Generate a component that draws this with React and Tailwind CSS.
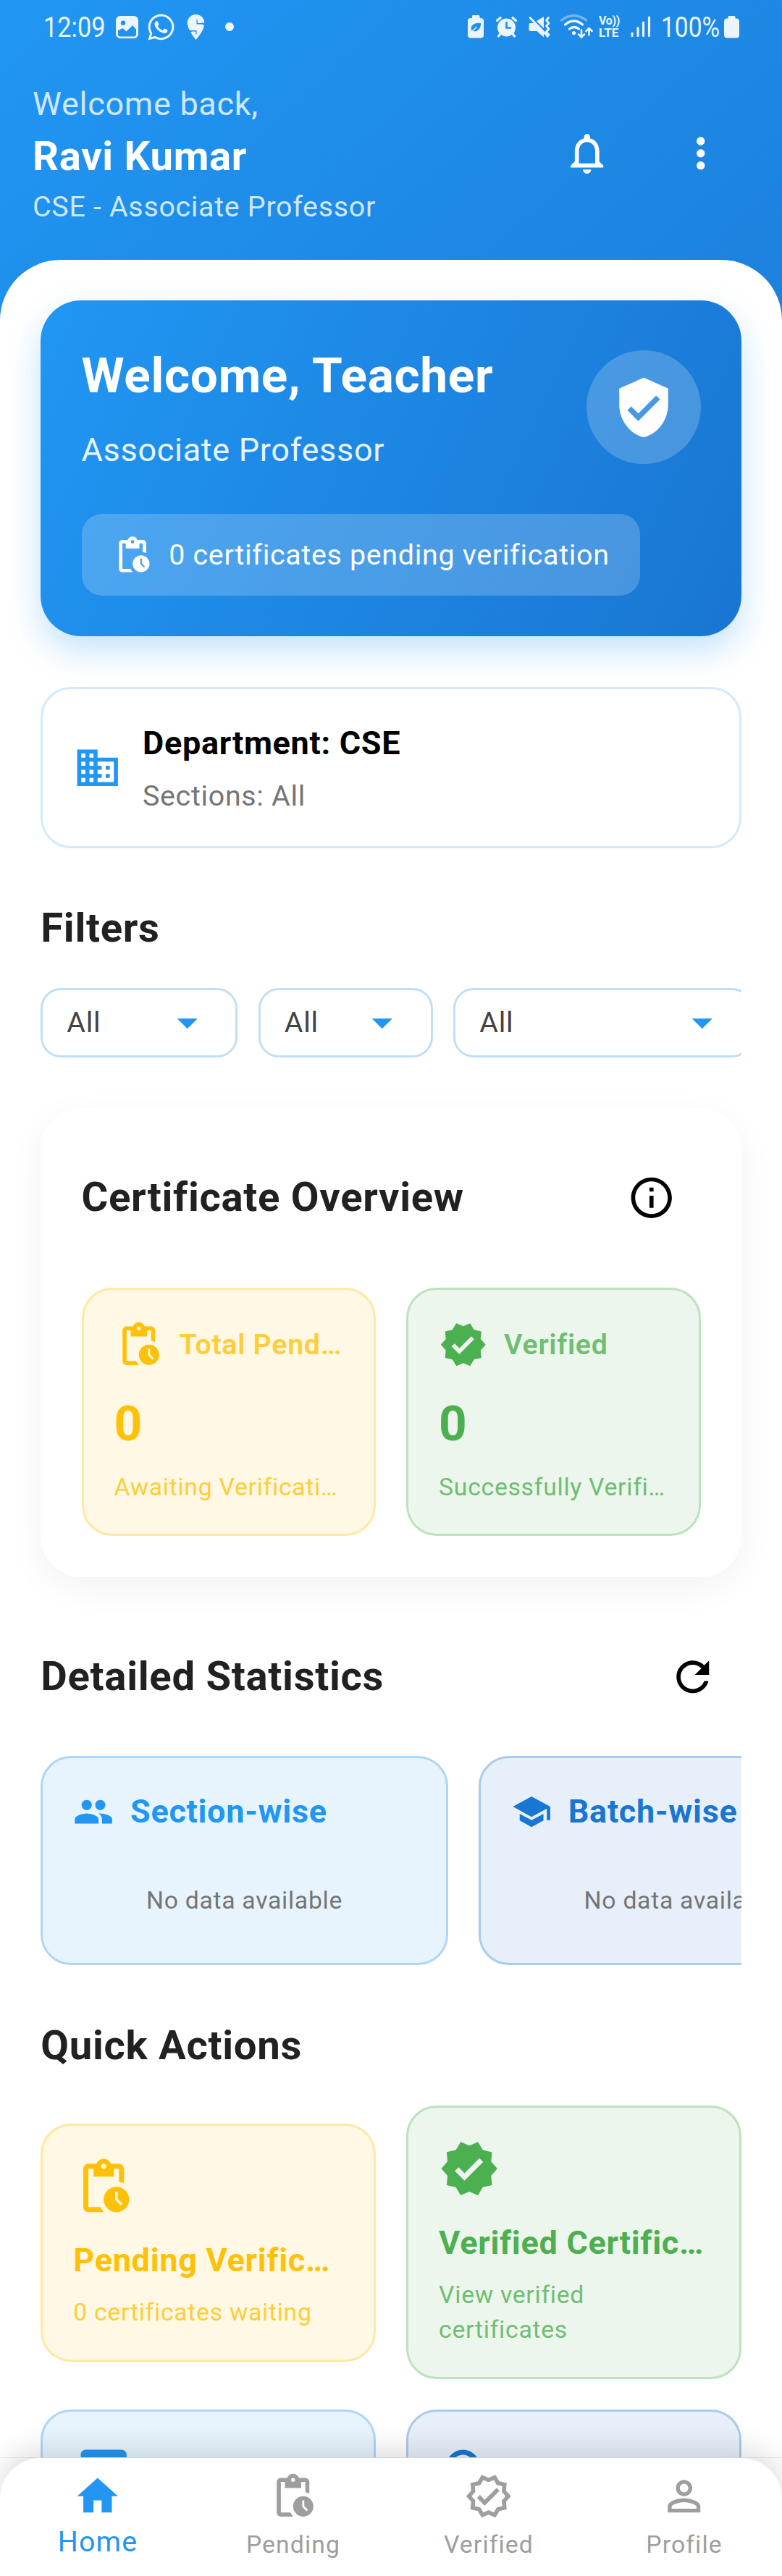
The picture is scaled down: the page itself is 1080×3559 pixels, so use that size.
import React from 'react';
import {
  MdArrowDropDown,
  MdAssessment,
  MdBusiness,
  MdHome,
  MdInfoOutline,
  MdMoreVert,
  MdNotificationsNone,
  MdOutlineVerified,
  MdPendingActions,
  MdPeople,
  MdPersonOutline,
  MdRefresh,
  MdSchool,
  MdSearch,
  MdVerified,
  MdVerifiedUser,
} from 'react-icons/md';
import { FaWhatsapp } from 'react-icons/fa';
import { SiSwiggy } from 'react-icons/si';

function StatusBar() {
  return (
    <div className="flex h-[76px] items-start pl-[60px] pr-[59px] text-[#eaf5ff]">
      <div className="mt-[18px] w-[98px] origin-left scale-x-[0.88] text-[39px] leading-[40px] tracking-normal">12:09</div>
      <svg className="mt-[22px] ml-[2px] h-[31px] w-[31px]" viewBox="0 0 31 31" fill="currentColor">
        <path
          fillRule="evenodd"
          d="M6 0h19a6 6 0 0 1 6 6v19a6 6 0 0 1-6 6H6a6 6 0 0 1-6-6V6a6 6 0 0 1 6-6zM10 6.5a3.2 3.2 0 1 0 0 6.4 3.2 3.2 0 0 0 0-6.4zM3 20v5.5a3 3 0 0 0 3 3h19a3 3 0 0 0 3-3V18.500l-5-5.500-8.500 8.500-5-4.500z"
        />
      </svg>
      <FaWhatsapp className="mt-[17px] ml-[11px] h-[41px] w-[41px]" />
      <SiSwiggy className="mt-[20px] ml-[10px] h-[35px] w-[35px]" />
      <div className="mt-[31px] ml-[23px] h-[12px] w-[12px] rounded-full bg-[#eaf5ff]" />
      <div className="flex-1" />
      <svg className="mt-[20px] h-[34px] w-[22px]" viewBox="646 20 22 34" fill="currentColor">
        <path d="M653 21h8q1.500 0 1.500 1.500V25h1.500q4 0 4 4v19.500q0 4-4 4H650q-4 0-4-4V29q0-4 4-4h2v-2.500q0-1.500 1-1.500z" />
        <path d="M664 32.500c-6-.5-11 .5-12.500 4.500-.7 2-.3 3.500.5 4.700 2 1.500 6 1.600 8.500-.700 2.500-2.500 2.500-5.500 3.500-8.500zM648.500 44c3-1 6-3.500 9.500-7" fill="#1f8fec" stroke="#1f8fec" strokeWidth="1" />
        <path d="M649 44c3.500-.8 6-3.500 9.500-7" fill="none" stroke="#eaf5ff" strokeWidth="1.300" />
      </svg>
      <svg className="mt-[20px] ml-[17px] h-[34px] w-[30px]" viewBox="685 20 30 34" fill="none" stroke="currentColor" strokeWidth="3.200" strokeLinecap="round">
        <circle cx="699.500" cy="38" r="12.500" fill="currentColor" stroke="none" />
        <path d="M686.500 28.500l4.500-4M712.500 28.500l-4.500-4M691.500 46l-3 4M707.500 46l3 4" />
        <path d="M699.500 31v7.500h5.500" stroke="#1f8fec" strokeWidth="2.600" />
      </svg>
      <svg className="mt-[20px] ml-[15px] h-[34px] w-[31px]" viewBox="730 20 31 34" fill="currentColor">
        <path d="M730.500 34q0-2 2-2h5l13.500 13v6.500l-9.500-8.500h-9q-2 0-2-2zM741 29l10-6v16z" />
        <path d="M732 24.500l24 25M757.500 24.500l-3 3.500 3.500 4-3.500 4 3.500 4-3.500 4 3.500 4-2 2.500" fill="none" stroke="currentColor" strokeWidth="2.700" strokeLinecap="round" strokeLinejoin="round" />
      </svg>
      <svg className="mt-[18px] ml-[12px] h-[36px] w-[46px]" viewBox="773 18 46 36" fill="none" stroke="currentColor" strokeWidth="3.400" strokeLinecap="round">
        <path d="M775.500 28q17-13 34 0" opacity="0.4" />
        <path d="M780.500 34q12-10 24 0M786.500 40q6.500-5 13 0" />
        <circle cx="792.500" cy="45.500" r="2.600" fill="currentColor" stroke="none" />
        <path d="M803 41.500v9.500M799 47.500l4 4 4-4M813.500 48.500V39.500M809.500 43l4-4 4 4" strokeWidth="2.600" />
      </svg>
      <div className="mt-[20px] ml-[8px] w-[32px] text-[16px] leading-[17px] font-bold tracking-[-0.3px] whitespace-nowrap">
        <div>Vo))</div>
        <div className="text-[17px] tracking-normal">LTE</div>
      </div>
      <svg className="mt-[20px] ml-[12px] h-[34px] w-[28px]" viewBox="871 20 28 34" stroke="currentColor" strokeWidth="3.200" strokeLinecap="round">
        <path d="M873 46v3.500M881 38.500v11M888.500 31v18.500M896.500 24v25.500" />
      </svg>
      <div className="mt-[18px] ml-[14px] w-[87px] origin-left scale-x-[0.86] text-[39px] leading-[40px] tracking-normal">100%</div>
      <svg className="mt-[20px] h-[34px] w-[21px]" viewBox="0 0 21 34" fill="currentColor">
        <path d="M7 2h7q1.500 0 1.500 1.500V5.500H17q4 0 4 4v19q0 4-4 4H4q-4 0-4-4v-19q0-4 4-4h1.500V3.500Q5.500 2 7 2z" />
      </svg>
    </div>
  );
}

function Header() {
  return (
    <header className="pb-[46px] text-white">
      <StatusBar />
      <div className="flex items-center pt-[35.500px] pl-[45px]">
        <div className="flex-1">
          <div className="text-[45px] leading-[64.350px] text-[#cfe7fd]">Welcome back,</div>
          <div className="text-[56.250px] leading-[80.400px] font-bold">Ravi Kumar</div>
          <div className="mt-[1.500px] -mb-[1.500px] text-[39.375px] leading-[56.300px] text-[#cfe7fd]">CSE - Associate Professor</div>
        </div>
        <MdNotificationsNone className="mr-[90px] h-[67.500px] w-[67.500px]" />
        <MdMoreVert className="mr-[78.500px] h-[67.500px] w-[67.500px]" />
      </div>
    </header>
  );
}

function WelcomeCard() {
  return (
    <section className="rounded-[56px] bg-[linear-gradient(115.6deg,#2196f3,#1976d2)] p-[56.250px] text-white shadow-[0_20px_46px_rgba(33,150,243,0.27)]">
      <div className="flex items-center justify-between">
        <div>
          <div className="text-[67.500px] leading-[96.500px] font-bold">Welcome, Teacher</div>
          <div className="mt-[22.300px] text-[45px] leading-[64.350px] text-white/90">Associate Professor</div>
        </div>
        <div className="flex h-[157.500px] w-[157.500px] items-center justify-center rounded-full bg-white/20">
          <MdVerifiedUser className="h-[90px] w-[90px]" />
        </div>
      </div>
      <div className="mt-[56.250px] inline-flex h-[112.500px] items-center gap-[22.500px] rounded-[28px] bg-white/20 px-[42px] align-top">
        <MdPendingActions className="h-[56.250px] w-[56.250px]" />
        <span className="mt-[1.500px] text-[39.375px] leading-[56px] whitespace-nowrap">0 certificates pending verification</span>
      </div>
    </section>
  );
}

function DepartmentCard() {
  return (
    <section className="mt-[70.300px] flex items-center gap-[28px] rounded-[42px] border-3 border-[#d3e9fc] bg-white px-[42.200px] py-[42.200px]">
      <MdBusiness className="h-[67.500px] w-[67.500px] text-[#2196f3]" />
      <div>
        <div className="text-[45px] leading-[64.350px] font-bold text-black">Department: CSE</div>
        <div className="mt-[13px] -mb-[1.750px] text-[39.375px] leading-[56.300px] text-[#757575]">Sections: All</div>
      </div>
    </section>
  );
}

function Select({ width }) {
  return (
    <div className={`flex h-[96px] shrink-0 items-center justify-between rounded-[28px] border-3 border-[#bfdff9] px-[33px] ${width}`}>
      <span className="mt-[1px] text-[39.375px] leading-[56px] text-[#424242]">All</span>
      <MdArrowDropDown className="h-[67.500px] w-[67.500px] text-[#2196f3]" />
    </div>
  );
}

function Tile({ icon: Icon, title, sub, box, main, soft }) {
  return (
    <div className={`min-w-0 flex-1 rounded-[42px] border-3 p-[42px] ${box}`}>
      <div className="flex items-center gap-[22.500px]">
        <Icon className={`h-[67.500px] w-[67.500px] shrink-0 ${main}`} />
        <div className={`mt-[1px] truncate text-[39.375px] leading-[56px] font-semibold ${soft}`}>{title}</div>
      </div>
      <div className={`mt-[27px] text-[67.500px] leading-[96.500px] font-bold ${main}`}>0</div>
      <div className={`mt-[16px] -mb-[2px] truncate text-[33.750px] leading-[48.300px] ${soft}`}>{sub}</div>
    </div>
  );
}

function Overview() {
  return (
    <section className="mt-[70.300px] rounded-[56px] bg-white p-[56.250px] shadow-[0_14px_50px_rgba(0,0,0,0.05)]">
      <div className="flex h-[135px] items-center justify-between pr-[33.750px]">
        <h2 className="text-[56.250px] leading-[80.400px] font-bold">Certificate Overview</h2>
        <MdInfoOutline className="h-[67.500px] w-[67.500px] text-black" />
      </div>
      <div className="mt-[57px] flex gap-[42.200px]">
        <Tile
          icon={MdPendingActions}
          title="Total Pending"
          sub="Awaiting Verification"
          box="border-[#ffe8a5] bg-[#fff8e5]"
          main="text-[#ffc107]"
          soft="text-[#ffcd39]"
        />
        <Tile
          icon={MdVerified}
          title="Verified"
          sub="Successfully Verified"
          box="border-[#bce2be] bg-[#ecf6ec]"
          main="text-[#4caf50]"
          soft="text-[#6fbe73]"
        />
      </div>
    </section>
  );
}

function StatCard({ icon: Icon, title, box, color }) {
  return (
    <div className={`h-[289px] w-[562.500px] shrink-0 rounded-[42px] border-3 p-[42px] ${box}`}>
      <div className={`flex items-center gap-[22.500px] ${color}`}>
        <Icon className="h-[56.250px] w-[56.250px]" />
        <span className="text-[45px] leading-[64.350px] font-bold whitespace-nowrap">{title}</span>
      </div>
      <div className="mt-[66px] text-center text-[33.750px] leading-[48.300px] text-[#757575]">No data available</div>
    </div>
  );
}

function ActionCard({ icon: Icon, title, sub, box, main, soft }) {
  return (
    <div className={`min-w-0 flex-1 rounded-[42px] border-3 p-[42px] ${box}`}>
      <Icon className={`h-[84.400px] w-[84.400px] ${main}`} />
      <div className={`mt-[28px] truncate text-[45px] leading-[64.350px] font-bold ${main}`}>{title}</div>
      <div className={`mt-[16px] -mb-[2px] text-[33.750px] leading-[48.300px] ${soft}`}>{sub}</div>
    </div>
  );
}

function NavItem({ icon: Icon, label, active }) {
  return (
    <div className={`flex flex-1 flex-col items-center pt-[19px] ${active ? 'text-[#2196f3]' : 'text-[#9e9e9e]'}`}>
      <Icon className="h-[67.500px] w-[67.500px]" />
      <span className={`leading-[56px] tracking-[1.100px] ${active ? 'mt-[1.500px] text-[39.375px]' : 'mt-[5px] text-[33.750px]'}`}>{label}</span>
    </div>
  );
}

export default function App() {
  return (
    <div className="flex h-[3559px] w-[1080px] flex-col overflow-hidden bg-white font-['Roboto',sans-serif] tracking-[0.703px] text-[#212121]">
      <main className="min-h-0 flex-1 overflow-hidden bg-[linear-gradient(138deg,#2196f3_0px,#1976d2_1614px)]">
        <Header />
        <div className="rounded-t-[84px] bg-white px-[56.250px] pt-[56.250px] pb-24">
          <WelcomeCard />
          <DepartmentCard />

          <h2 className="mt-[70.300px] text-[56.250px] leading-[80.400px] font-bold">Filters</h2>
          <div className="mt-[42.200px] flex gap-[28.500px] overflow-hidden">
            <Select width="w-[272px]" />
            <Select width="w-[241px]" />
            <Select width="w-[413px]" />
          </div>

          <Overview />

          <div className="mt-[70.300px] flex h-[135px] items-center justify-between pr-[33.750px]">
            <h2 className="text-[56.250px] leading-[80.400px] font-bold">Detailed Statistics</h2>
            <MdRefresh className="h-[67.500px] w-[67.500px] text-black" />
          </div>
          <div className="mt-[42.200px] flex gap-[42.200px] overflow-hidden">
            <StatCard icon={MdPeople} title="Section-wise" box="border-[#aed7f7] bg-[#e7f4fe]" color="text-[#2196f3]" />
            <StatCard icon={MdSchool} title="Batch-wise" box="border-[#abcbeb] bg-[#e7f0fa]" color="text-[#1976d2]" />
          </div>

          <h2 className="mt-[70.300px] text-[56.250px] leading-[80.400px] font-bold">Quick Actions</h2>
          <div className="mt-[43.500px] flex items-center gap-[42.200px]">
            <ActionCard
              icon={MdPendingActions}
              title="Pending Verifications"
              sub="0 certificates waiting"
              box="border-[#ffe8a5] bg-[#fff8e5]"
              main="text-[#ffc107]"
              soft="text-[#ffcd39]"
            />
            <ActionCard
              icon={MdVerified}
              title="Verified Certificates"
              sub="View verified certificates"
              box="border-[#bce2be] bg-[#ecf6ec]"
              main="text-[#4caf50]"
              soft="text-[#6fbe73]"
            />
          </div>
          <div className="mt-[42.200px] flex gap-[42.200px]">
            <div className="h-[330px] flex-1 rounded-[42px] border-3 border-[#aed7f7] bg-[#e7f4fe] p-[42px]">
              <MdAssessment className="h-[84.400px] w-[84.400px] text-[#2196f3]" />
            </div>
            <div className="h-[330px] flex-1 rounded-[42px] border-3 border-[#abcbeb] bg-[#e7f0fa] p-[42px]">
              <MdSearch className="h-[84.400px] w-[84.400px] text-[#1976d2]" />
            </div>
          </div>
        </div>
      </main>
      <div className="relative z-10 h-[164px] shrink-0 border-t border-[#e3edf3]">
        <nav className="flex h-full rounded-t-[56px] bg-white shadow-[0_-14px_36px_rgba(0,0,0,0.12)]">
          <NavItem icon={MdHome} label="Home" active />
          <NavItem icon={MdPendingActions} label="Pending" />
          <NavItem icon={MdOutlineVerified} label="Verified" />
          <NavItem icon={MdPersonOutline} label="Profile" />
        </nav>
      </div>
    </div>
  );
}
